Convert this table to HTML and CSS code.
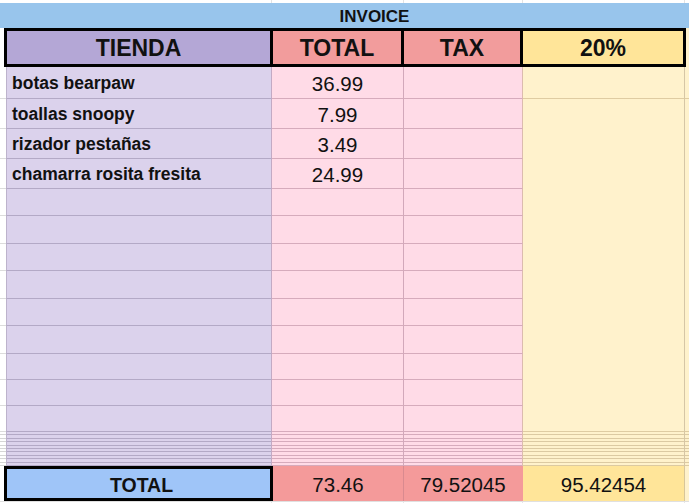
FILE: index.html
```html
<!DOCTYPE html>
<html lang="es">
<head>
<meta charset="utf-8">
<title>Invoice</title>
<link rel="stylesheet" href="styles.css">
</head>
<body>
<div class="sheet">
  <div class="cell top k0"></div><div class="cell top k1"></div><div class="cell top k2"></div><div class="cell top k3"></div><div class="cell top k4"></div><div class="cell top k5"></div>

  <div class="invoice">INVOICE</div>

  <div class="head">
    <div class="gap"></div>
    <div class="hbox">
      <div class="h h1">TIENDA</div>
      <div class="h h2">TOTAL</div>
      <div class="h h3">TAX</div>
      <div class="h h4">20%</div>
    </div>
    <div class="hrest"></div>
  </div>

  <div class="cell k0"></div><div class="cell k1 item">botas bearpaw</div><div class="cell k2 num">36.99</div><div class="cell k3"></div><div class="cell k4"></div><div class="cell k5"></div>
  <div class="cell k0"></div><div class="cell k1 item">toallas snoopy</div><div class="cell k2 num">7.99</div><div class="cell k3"></div><div class="cell k4 merged"></div><div class="cell k5 merged"></div>
  <div class="cell k0"></div><div class="cell k1 item">rizador pestañas</div><div class="cell k2 num">3.49</div><div class="cell k3"></div>
  <div class="cell k0"></div><div class="cell k1 item">chamarra rosita fresita</div><div class="cell k2 num">24.99</div><div class="cell k3"></div>
  <div class="cell k0"></div><div class="cell k1"></div><div class="cell k2"></div><div class="cell k3"></div>
  <div class="cell k0"></div><div class="cell k1"></div><div class="cell k2"></div><div class="cell k3"></div>
  <div class="cell k0"></div><div class="cell k1"></div><div class="cell k2"></div><div class="cell k3"></div>
  <div class="cell k0"></div><div class="cell k1"></div><div class="cell k2"></div><div class="cell k3"></div>
  <div class="cell k0"></div><div class="cell k1"></div><div class="cell k2"></div><div class="cell k3"></div>
  <div class="cell k0"></div><div class="cell k1"></div><div class="cell k2"></div><div class="cell k3"></div>
  <div class="cell k0"></div><div class="cell k1"></div><div class="cell k2"></div><div class="cell k3"></div>
  <div class="cell k0"></div><div class="cell k1"></div><div class="cell k2"></div><div class="cell k3"></div>
  <div class="cell k0"></div><div class="cell k1"></div><div class="cell k2"></div><div class="cell k3"></div>

  <div class="cell thin k0"></div><div class="cell thin k1"></div><div class="cell thin k2"></div><div class="cell thin k3"></div><div class="cell thin k4"></div><div class="cell thin k5"></div>

  <div class="tot">
    <div class="gap"></div>
    <div class="tbox">TOTAL</div>
    <div class="t t2">73.46</div>
    <div class="t t3">79.52045</div>
    <div class="t t4">95.42454</div>
    <div class="trest"></div>
  </div>

  <div class="cell bottom k0"></div><div class="cell bottom k1"></div><div class="cell bottom k2"></div><div class="cell bottom k3"></div><div class="cell bottom k4"></div><div class="cell bottom k5"></div>
</div>
</body>
</html>
```
FILE: styles.css
```css
* { box-sizing: border-box; }
html, body { margin: 0; padding: 0; background: #fff; }
body {
  width: 689px;
  height: 503px;
  overflow: hidden;
  font-family: "Liberation Sans", Arial, sans-serif;
  color: #111;
}
.sheet {
  display: grid;
  grid-template-columns: 6px 266px 132px 119px 162px 1fr;
  grid-template-rows: 3px 25px 39px 32px 30px 30px 30px 27px 28px 27px 28px 27px 28px 26px 26px 26px 34px 35px 1fr;
  height: 503px;
}
.cell {
  min-width: 0;
  border-bottom: 1px solid transparent;
  border-right: 1px solid transparent;
}
/* column colours */
.k0 { background: #fff; border-bottom-color: #dcdcdc; border-right: 0; }
.k1 { background: #dbd2ec; border-bottom-color: #b3a9c6; border-left: 1px solid #bdb3cc; border-right-color: #c3aac4; }
.k2 { background: #ffdbe7; border-bottom-color: #d6abbc; border-right-color: #d2a8ba; }
.k3 { background: #ffdbe7; border-bottom-color: #d6abbc; border-right-color: #dcbcae; }
.k4 { background: #fff2cc; border-bottom-color: #dfcca2; border-right-color: #d6c6a6; }
.k5 { background: #fff2cc; border-bottom-color: #dfcca2; border-right: 0; }
.merged { grid-row: span 12; }

.top { background: #fff; border-bottom: 0; border-left: 0; border-right-color: #e3e3e3; }
.top.k0, .top.k5 { border-right: 0; }
.bottom { background: #fff; border-bottom: 0; border-left: 0; border-top: 1px solid #e0e0e0; border-right-color: #e6e6e6; }

.thin { border-bottom: 0; }
.thin.k0 { background: repeating-linear-gradient(to bottom, #fff 0 2.4px, #d6d6d6 2.4px 3.4px); }
.thin.k1 { background: repeating-linear-gradient(to bottom, #dbd2ec 0 2.4px, #b3a9c6 2.4px 3.4px); }
.thin.k2, .thin.k3 { background: repeating-linear-gradient(to bottom, #ffdbe7 0 2.4px, #d6abbc 2.4px 3.4px); }
.thin.k4, .thin.k5 { background: repeating-linear-gradient(to bottom, #fff2cc 0 2.4px, #dccaa2 2.4px 3.4px); }

.item {
  display: flex;
  align-items: center;
  padding: 2px 0 0 5px;
  font-weight: bold;
  font-size: 17.5px;
  white-space: nowrap;
}
.num {
  display: flex;
  align-items: center;
  justify-content: center;
  padding-top: 2px;
  font-size: 20.5px;
}

.invoice {
  grid-column: 1 / -1;
  display: flex;
  align-items: center;
  justify-content: center;
  padding: 2px 0 0 60px;
  background: #98c5ec;
  font-weight: bold;
  font-size: 17px;
}

.head {
  grid-column: 1 / -1;
  display: flex;
}
.gap { width: 4px; flex: none; background: #fff; }
.hbox {
  display: flex;
  border: 3px solid #000;
  border-right: 0;
}
.h {
  display: flex;
  align-items: center;
  justify-content: center;
  padding-top: 1px;
  border-right: 3px solid #000;
  font-weight: bold;
  font-size: 23px;
}
.h1 { width: 266px; background: #b4a7d6; }
.h2 { width: 131px; background: #f29c9c; }
.h3 { width: 119px; background: #f29c9c; }
.h4 { width: 163px; background: #ffe599; }
.hrest { flex: 1; background: #fff2cc; }

.tot {
  grid-column: 1 / -1;
  display: flex;
}
.tbox {
  width: 269px;
  display: flex;
  align-items: center;
  justify-content: center;
  padding: 3px 0 0 6px;
  border: 3px solid #000;
  background: #9fc5f8;
  font-weight: bold;
  font-size: 19.5px;
}
.t {
  display: flex;
  align-items: center;
  justify-content: center;
  padding-top: 3px;
  font-size: 20.5px;
  border-right: 1px solid transparent;
}
.t2 { width: 131px; background: #f49a9a; border-right-color: #d98a8f; }
.t3 { width: 119px; background: #f49a9a; }
.t4 { width: 162px; background: #ffe599; border-right-color: #d8c69a; }
.trest { flex: 1; background: #fff2cc; }
```
